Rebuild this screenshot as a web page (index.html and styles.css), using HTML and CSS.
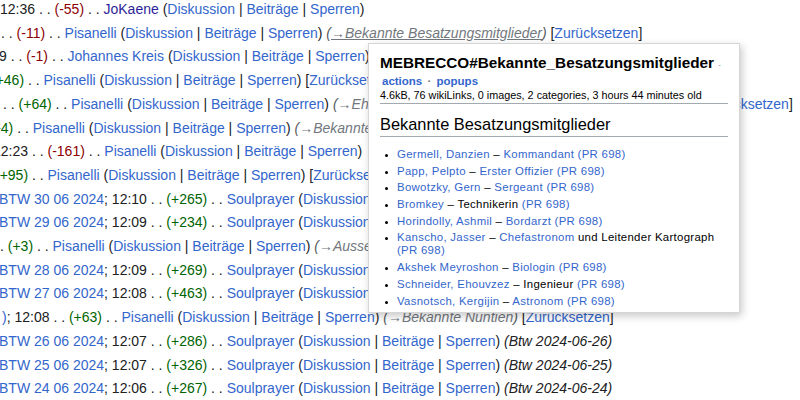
FILE: index.html
```html
<!DOCTYPE html>
<html lang="de">
<head>
<meta charset="UTF-8">
<title>Letzte Änderungen</title>
<link rel="stylesheet" href="styles.css">
</head>
<body>
<ul class="changes">
  <li class="r1">12:36 . . <span class="neg">(-55)</span> . . <a class="seen">JoKaene</a> <span class="tools">(<a>Diskussion</a> | <a>Beiträge</a> | <a>Sperren</a>)</span></li>
  <li class="r2">. . <span class="neg">(-11)</span> . . <a>Pisanelli</a> <span class="tools">(<a>Diskussion</a> | <a>Beiträge</a> | <a>Sperren</a>)</span> <span class="summary">(<a class="hover">→Bekannte Besatzungsmitglieder</a>)</span> [<a>Zurücksetzen</a>]</li>
  <li class="r3">9 . . <span class="neg">(-1)</span> . . <a>Johannes Kreis</a> <span class="tools">(<a>Diskussion</a> | <a>Beiträge</a> | <a>Sperren</a>)</span> <span class="summary">(<a>→Bekannte Besatzungsmitglieder</a>)</span></li>
  <li class="r4"><span class="pos">(+46)</span> . . <a>Pisanelli</a> <span class="tools">(<a>Diskussion</a> | <a>Beiträge</a> | <a>Sperren</a>)</span> [<a>Zurücksetzen</a>]</li>
  <li class="r5">. . <span class="pos">(+64)</span> . . <a>Pisanelli</a> <span class="tools">(<a>Diskussion</a> | <a>Beiträge</a> | <a>Sperren</a>)</span> <span class="summary">(<a>→Ehemalige Besatzungsmitglieder der Mebrecco im Bau</a>)</span> [<a>Zurücksetzen</a>]</li>
  <li class="r6"><span class="pos">(+4)</span> . . <a>Pisanelli</a> <span class="tools">(<a>Diskussion</a> | <a>Beiträge</a> | <a>Sperren</a>)</span> <span class="summary">(<a>→Bekannte Besatzungsmitglieder</a>)</span></li>
  <li class="r7">12:23 . . <span class="neg">(-161)</span> . . <a>Pisanelli</a> <span class="tools">(<a>Diskussion</a> | <a>Beiträge</a> | <a>Sperren</a>)</span></li>
  <li class="r8"><span class="pos">(+95)</span> . . <a>Pisanelli</a> <span class="tools">(<a>Diskussion</a> | <a>Beiträge</a> | <a>Sperren</a>)</span> [<a>Zurücksetzen</a>]</li>
  <li class="r9"><a>BTW 30 06 2024</a>; 12:10 . . <span class="pos">(+265)</span> . . <a>Soulprayer</a> <span class="tools">(<a>Diskussion</a> | <a>Beiträge</a> | <a>Sperren</a>)</span> <span class="note">(Btw 2024-06-30)</span></li>
  <li class="r9"><a>BTW 29 06 2024</a>; 12:09 . . <span class="pos">(+234)</span> . . <a>Soulprayer</a> <span class="tools">(<a>Diskussion</a> | <a>Beiträge</a> | <a>Sperren</a>)</span> <span class="note">(Btw 2024-06-29)</span></li>
  <li class="r11">. <span class="pos">(+3)</span> . . <a>Pisanelli</a> <span class="tools">(<a>Diskussion</a> | <a>Beiträge</a> | <a>Sperren</a>)</span> <span class="summary">(<a>→Aussehen</a>)</span></li>
  <li class="r9"><a>BTW 28 06 2024</a>; 12:09 . . <span class="pos">(+269)</span> . . <a>Soulprayer</a> <span class="tools">(<a>Diskussion</a> | <a>Beiträge</a> | <a>Sperren</a>)</span> <span class="note">(Btw 2024-06-28)</span></li>
  <li class="r9"><a>BTW 27 06 2024</a>; 12:08 . . <span class="pos">(+463)</span> . . <a>Soulprayer</a> <span class="tools">(<a>Diskussion</a> | <a>Beiträge</a> | <a>Sperren</a>)</span> <span class="note">(Btw 2024-06-27)</span></li>
  <li class="r14"><a>)</a>; 12:08 . . <span class="pos">(+63)</span> . . <a>Pisanelli</a> <span class="tools">(<a>Diskussion</a> | <a>Beiträge</a> | <a>Sperren</a>)</span> <span class="summary">(<a>→Bekannte Nuntien</a>)</span> [<a>Zurücksetzen</a>]</li>
  <li class="r9"><a>BTW 26 06 2024</a>; 12:07 . . <span class="pos">(+286)</span> . . <a>Soulprayer</a> <span class="tools">(<a>Diskussion</a> | <a>Beiträge</a> | <a>Sperren</a>)</span> <span class="note">(Btw 2024-06-26)</span></li>
  <li class="r9"><a>BTW 25 06 2024</a>; 12:07 . . <span class="pos">(+326)</span> . . <a>Soulprayer</a> <span class="tools">(<a>Diskussion</a> | <a>Beiträge</a> | <a>Sperren</a>)</span> <span class="note">(Btw 2024-06-25)</span></li>
  <li class="r9"><a>BTW 24 06 2024</a>; 12:06 . . <span class="pos">(+267)</span> . . <a>Soulprayer</a> <span class="tools">(<a>Diskussion</a> | <a>Beiträge</a> | <a>Sperren</a>)</span> <span class="note">(Btw 2024-06-24)</span></li>
</ul>

<div class="popup">
  <div class="popTitle"><b>MEBRECCO#Bekannte_Besatzungsmitglieder</b> <span class="dot">·</span></div>
  <div class="popActions"><a>actions</a> <span class="dot">·</span> <a>popups</a></div>
  <div class="popMeta">4.6kB, 76 wikiLinks, 0 images, 2 categories, 3 hours 44 minutes old</div>
  <h2>Bekannte Besatzungsmitglieder</h2>
  <ul class="crew">
    <li><a>Germell, Danzien</a> – <a>Kommandant</a> <a class="ref">(PR 698)</a></li>
    <li><a>Papp, Pelpto</a> – <a>Erster Offizier</a> <a class="ref">(PR 698)</a></li>
    <li><a>Bowotzky, Gern</a> – <a>Sergeant</a> <a class="ref">(PR 698)</a></li>
    <li><a>Bromkey</a> – Technikerin <a class="ref">(PR 698)</a></li>
    <li><a>Horindolly, Ashmil</a> – <a>Bordarzt</a> <a class="ref">(PR 698)</a></li>
    <li><a>Kanscho, Jasser</a> – <a>Chefastronom</a> und Leitender Kartograph <a class="ref">(PR 698)</a></li>
    <li><a>Akshek Meyroshon</a> – <a>Biologin</a> <a class="ref">(PR 698)</a></li>
    <li><a>Schneider, Ehouvzez</a> – Ingenieur <a class="ref">(PR 698)</a></li>
    <li><a>Vasnotsch, Kergijin</a> – <a>Astronom</a> <a class="ref">(PR 698)</a></li>
  </ul>
</div>
</body>
</html>
```

FILE: styles.css
```css
* {
    margin: 0;
    padding: 0;
}

body {
    font-family: "Liberation Sans", Arial, sans-serif;
    font-size: 14px;
    color: #202122;
    background: #fff;
    overflow: hidden;
}

a {
    color: #3366cc;
}

.changes {
    list-style: none;
    margin-top: -2px;
}

.changes li {
    line-height: 23.7px;
    white-space: nowrap;
}

.r1 { margin-left: 0; }
.r2 { margin-left: 1px; }
.r3 { margin-left: -1px; }
.r4 { margin-left: -9px; }
.r5 { margin-left: 3px; }
.r6 { margin-left: -12px; }
.r7 { margin-left: -7px; }
.r8 { margin-left: -5px; }
.r9 { margin-left: -1px; }
.r11 { margin-left: 0; }
.r14 { margin-left: 2px; }

.neg { color: #8b0000; }
.pos { color: #006400; }

a.seen { color: #2e1f99; }

.summary {
    font-style: italic;
    color: #54595d;
}

.summary a {
    color: #72777d;
}

.summary a.hover {
    text-decoration: underline;
}

.note {
    font-style: italic;
}

.popup {
    position: absolute;
    left: 368px;
    top: 43px;
    width: 348px;
    height: 248px;
    padding: 10px 11px 10px 11px;
    background: #fff;
    border: 1px solid #d6d6d6;
    box-shadow: 2px 3px 8px rgba(0, 0, 0, 0.22);
}

.popTitle {
    font-size: 15.3px;
    line-height: 18px;
    color: #000;
    white-space: nowrap;
}

.popTitle .dot {
    font-size: 9px;
    color: #72777d;
}

.popActions {
    font-size: 11.5px;
    font-weight: bold;
    line-height: 14px;
    padding-left: 2px;
}

.popActions .dot {
    color: #72777d;
    padding: 0 2px;
}

.popMeta {
    font-size: 10.8px;
    line-height: 14px;
    color: #000;
    padding-bottom: 1px;
    border-bottom: 1px solid #a2a9b1;
}

.popup h2 {
    font-size: 16.4px;
    font-weight: normal;
    line-height: 22px;
    color: #000;
    margin-top: 9px;
    padding-bottom: 1px;
    border-bottom: 1px solid #a2a9b1;
}

.crew {
    margin: 11px 0 0 17px;
    list-style: disc;
    font-size: 11.4px;
    letter-spacing: 0.3px;
    line-height: 13px;
    color: #000;
}

.crew li {
    margin-bottom: 3.7px;
}

.crew li::marker {
    font-size: 9px;
}

.crew .ref {
    white-space: nowrap;
}
```
